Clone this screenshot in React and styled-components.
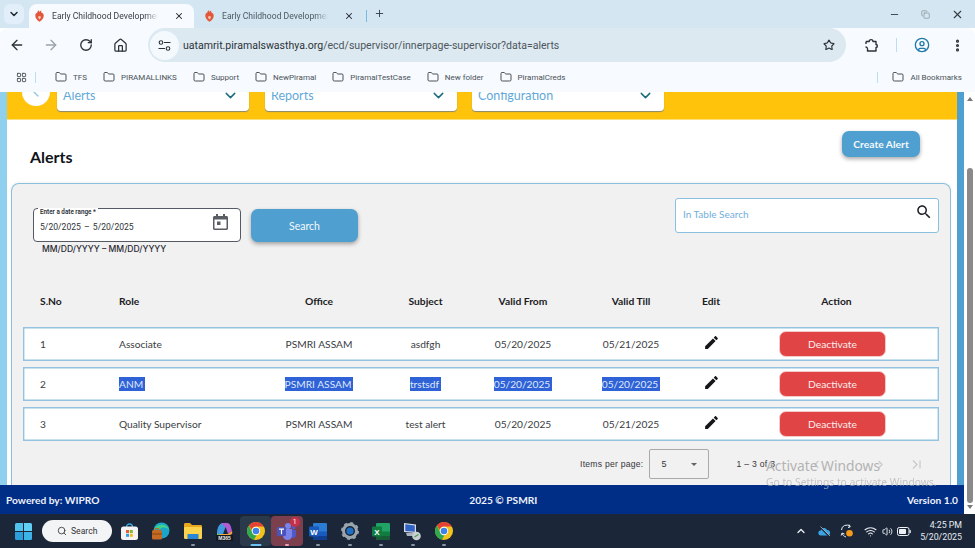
import React from "react";
import styled, { createGlobalStyle } from "styled-components";
import { ArrowLeft, ArrowRight, RotateCw, House, Star, CircleUser, EllipsisVertical, LayoutGrid, Folder, X, Plus, Minus, ChevronDown, ChevronLeft, ChevronRight, Search as SearchGlyph, ChevronUp, Wifi, Volume2, Copy } from "lucide-react";

const Global = createGlobalStyle`
  html, body { margin: 0; padding: 0; background: #fff; }
  * { box-sizing: border-box; }
  #root { width: 975px; height: 548px; overflow: hidden; }
`;
const UI = `Roboto, "Noto Sans", sans-serif`;
const PAGE = `Lato, "Noto Sans", sans-serif`;

const Root = styled.div`position: relative; width: 975px; height: 548px; display: flex; flex-direction: column; overflow: hidden; font-family: ${PAGE};`;

/* Tab strip */
const TabStrip = styled.div`height: 28px; background: #d3e6f2; display: flex; align-items: flex-end; padding-left: 4px; flex: none;`;
const TabMenu = styled.div`width: 20px; height: 20px; margin-bottom: 4px; border-radius: 6px; background: #e2effa; color: #1f2a33; display: flex; align-items: center; justify-content: center; margin-right: 5px;`;
const Tab = styled.div`width: ${p => p.$w}px; height: 24px; margin-left: ${p => p.$l || 0}px; display: flex; align-items: center; padding-left: 5px; border-radius: 8px 8px 0 0; background: ${p => p.$active ? "#f7fafe" : "transparent"}; color: ${p => p.$active ? "#3a4148" : "#4f5860"};`;
const TabText = styled.span`font: 8.6px ${UI}; width: 106px; margin-left: 7px; white-space: nowrap; overflow: hidden; mask-image: linear-gradient(to right, #000 88%, transparent);`;
const TabClose = styled.span`margin-left: 16px; display: flex; color: #20262b;`;
const TabSep = styled.span`width: 1px; height: 12px; background: #79b9e0; margin: 0 0 6px 2px; align-self: flex-end;`;
const NewTab = styled.span`display: flex; margin: 0 0 9px 7px; color: #333d45;`;
const WinControls = styled.div`margin-left: auto; height: 28px; display: flex; align-items: center; gap: 21px; padding-right: 11px; color: #333d45;`;

/* Toolbar */
const Toolbar = styled.div`height: 34px; background: #f7fafe; border-radius: 8px 8px 0 0; display: flex; align-items: center; flex: none; padding-left: 8px;`;
const NavBtn = styled.span`width: ${p => p.$w}px; display: flex; justify-content: center; color: ${p => p.$off ? "#9aa3aa" : "#2a3238"};`;
const Omnibox = styled.div`width: 698px; height: 34px; margin-left: 4px; border-radius: 17px; background: #dce9f1; display: flex; align-items: center; padding-left: 2px;`;
const TuneBadge = styled.span`width: 29px; height: 29px; border-radius: 50%; background: #f4f9fd; display: flex; align-items: center; justify-content: center; color: #2a3238;`;
const Url = styled.span`font: 10.56px ${UI}; color: #2c3339; margin-left: 4px; white-space: nowrap; flex: 1;`;
const UrlDim = styled.span`color: #4d565d;`;
const StarBox = styled.span`display: flex; margin-right: 11px; color: #2a3238;`;
const ToolSep = styled.span`width: 1px; height: 14px; background: #bcdcf0;`;

/* Bookmarks */
const BookmarkBar = styled.div`height: 30px; background: #f7fafe; display: flex; align-items: center; flex: none; padding: 0 13px 0 16px; color: #454d54;`;
const Apps = styled.span`display: flex; color: #4b5359; margin-right: 8px;`;
const BarSep = styled.span`width: 1px; height: 11px; background: #bcdcf0; margin-right: ${p => p.$r}px;`;
const Mark = styled.span`display: flex; align-items: center; gap: 6px; font: 8px ${UI}; color: #4a5259; margin-right: 16px; white-space: nowrap;`;
const AllMarks = styled(Mark)`margin: 0;`;
const Spacer = styled.span`flex: 1;`;

/* Page */
const Body = styled.div`height: 422px; display: flex; flex: none;`;
const Column = styled.div`width: 964px; display: flex; flex-direction: column;`;
const Viewport = styled.div`height: 393px; display: flex; overflow: hidden; background: #fff;`;
const SkyStrip = styled.div`width: 7px; background: #8fd0ee; flex: none;`;
const Content = styled.div`width: 950px; flex: none; display: flex; flex-direction: column;`;
const BlueStrip = styled.div`width: 7px; background: #4f9fd0; flex: none;`;
const Band = styled.div`height: 28px; flex: none; background: #ffc30b; border-bottom: 1px solid #fbe07a; display: flex; align-items: flex-end; padding: 0 0 8px 15px; overflow: hidden;`;
const BackCircle = styled.span`width: 28px; height: 28px; flex: none; border-radius: 50%; background: #fff; margin: 0 7px 5px 0; display: flex; align-items: center; justify-content: center; color: #8fc3e2;`;
const NavSelect = styled.div`width: 192px; height: 32px; flex: none; background: #fff; border-radius: 4px; box-shadow: 0 1px 1px #8a8a70; margin-right: ${p => p.$r}px; padding: 0 10px 0 6px; display: flex; align-items: center; justify-content: space-between; font: 12.5px ${PAGE}; color: #62a9d8;`;
const NavChevron = styled(ChevronDown)`color: #176b7d;`;

const TitleRow = styled.div`height: 63px; flex: none; display: flex; justify-content: space-between; align-items: flex-start; padding: 11px 37px 0 23px;`;
const Title = styled.h1`margin: 15px 0 0; font: 700 16px/22px ${PAGE}; color: #10131a;`;
const PrimaryBtn = styled.button`border: 0; background: #4f9fd0; color: #f4f9fc; border-radius: 7px; font-family: ${PAGE}; box-shadow: 0 2px 4px rgba(0,0,0,.35); padding: 0;`;
const CreateBtn = styled(PrimaryBtn)`width: 78px; height: 26px; font-size: 10.3px; font-weight: 700;`;
const SearchBtn = styled(PrimaryBtn)`width: 107px; height: 33px; font-size: 10.5px; margin: 1px 0 0 10px;`;

const Panel = styled.section`flex: 1; margin: 0 6px 0 4px; background: #f1f1f1; border: 1px solid #8abfde; border-bottom: 0; border-radius: 8px 8px 0 0; padding: 14px 11px 0 11px; box-shadow: 0 -1px 3px rgba(0,0,0,.05);`;
const FilterRow = styled.div`height: 93px; display: flex; justify-content: space-between; align-items: flex-start;`;
const DateGroup = styled.div`display: grid; grid-template-columns: auto auto; margin: 10px 0 0 10px; align-items: start;`;
const DateField = styled.div`position: relative; width: 208px; height: 34px; background: #fff; border: 1px solid #565a66; border-radius: 4px; padding: 11px 0 0 6px; font: 8.6px/14px ${UI}; color: #30343a; word-spacing: 1px;`;
const DateLabel = styled.span`position: absolute; left: 4px; top: -1px; background: #fff; padding: 0 2px; font: 600 6.3px/9px ${UI}; color: #2a2d33; white-space: nowrap; word-spacing: 0;`;
const CalIcon = styled.svg`position: absolute; right: 12px; top: 5px; color: #5a5d63;`;
const DateHint = styled.div`grid-column: 1 / span 2; margin: 1px 0 0 9px; font: 500 8.55px/12px Inter, ${UI}; color: #2b2b33;`;
const SearchBox = styled.div`width: 264px; height: 35px; background: #fff; border: 1px solid #8abfde; border-radius: 3px; padding: 0 5px 0 7px; display: flex; justify-content: space-between; font: 10px/31px ${PAGE}; color: #72aedb;`;
const SearchGlass = styled.svg`margin-top: 4px; color: #1c2026;`;

const Grid = styled.div`display: grid; grid-template-columns: 96px 140px 120px 93px 102px 114px 46px 205px; align-items: center; width: 916px;`;
const HeadRow = styled(Grid)`height: 20px; margin-bottom: 16px; font: 700 10.3px/20px ${PAGE}; color: #1b1c24;`;
const DataRow = styled(Grid)`height: 34px; margin-bottom: 6px; background: #fff; box-shadow: inset 0 0 0 1.4px #93c3e0; font: 10.2px/14px ${PAGE}; color: #3a3d42;`;
const Cell = styled.div`text-align: ${p => p.$left ? "left" : "center"}; padding-left: ${p => p.$pad || 0}px; white-space: nowrap;`;
const Picked = styled.span`background: #2f62d6; color: #dfe8fa; padding: 1px 2px 1px 0;`;
const EditBtn = styled.svg`display: block; margin: -3px auto 0; color: #15171a;`;
const DeactBtn = styled.button`display: block; width: 107px; height: 26px; margin: 0 0 0 45px; border: 1px solid #f3c9c9; border-radius: 7px; background: #e04445; color: #fbeeee; font: 10.3px ${PAGE}; padding: 0;`;

const Pager = styled.div`display: flex; align-items: center; height: 30px; margin-top: 8px; padding-left: 557px; font: 8.6px "Liberation Sans", Arial, sans-serif; color: #34373c;`;
const PerPage = styled.span`letter-spacing: .25px; font-size: 8.6px; white-space: nowrap;`;
const PageSelect = styled.div`position: relative; width: 60px; height: 30px; margin-left: 6px; border: 1px solid #aaa; border-radius: 2px; padding: 0 0 0 11px; line-height: 28px; font-size: 9px;`;
const Caret = styled.span`position: absolute; right: 11px; top: 13px; border-left: 3.5px solid transparent; border-right: 3.5px solid transparent; border-top: 3.5px solid #606368;`;
const Range = styled.span`margin-left: 27px; font-size: 8.6px; letter-spacing: .3px; white-space: nowrap; width: 70px;`;
const PageIcon = styled.span`display: flex; color: #c9c9c9; margin-left: ${p => p.$l}px;`;

const Watermark = styled.div`position: absolute; left: 766px; top: 457px; color: #b3b3b3; font: 13.8px/18px "Noto Sans", sans-serif; white-space: nowrap; pointer-events: none;`;
const WatermarkSub = styled.div`font-size: 10.3px; line-height: 13px; margin-top: 1px; opacity: .72;`;

const Footer = styled.footer`height: 29px; flex: none; background: #002d86; color: #eef2fa; display: flex; justify-content: space-between; align-items: center; padding: 0 6px; font: 700 10.2px ${PAGE};`;

const Scrollbar = styled.div`position: relative; width: 11px; flex: none; background: #fff; display: flex; flex-direction: column; align-items: center; padding-top: 5px;`;
const ScrollUp = styled.span`border-left: 3.5px solid transparent; border-right: 3.5px solid transparent; border-bottom: 4px solid #787878;`;
const ScrollDown = styled.span`border-left: 3.5px solid transparent; border-right: 3.5px solid transparent; border-top: 4px solid #787878;`;
const Thumb = styled.div`width: 6px; height: 335px; margin: 67px 0 2px; background: #8a8a8a; border-radius: 3px;`;

/* Taskbar */
const Taskbar = styled.div`height: 34px; flex: none; background: #1b2739; display: flex; align-items: center; padding: 0 13px 0 15px; color: #e8edf3;`;
const SearchPill = styled.div`width: 70px; height: 22px; margin: 0 2.3px 0 10px; background: #f3f4f6; border-radius: 11px; display: flex; align-items: center; gap: 4px; padding-left: 15px; color: #333; font: 8.6px ${UI};`;
const Slot = styled.div`position: relative; width: 31.4px; height: 30px; display: flex; align-items: center; justify-content: center; border-radius: 4px; background: ${p => p.$bg || "transparent"};`;
const Dot = styled.span`position: absolute; bottom: 0; left: 50%; transform: translateX(-50%); width: ${p => p.$w || 4}px; height: 2px; border-radius: 1px; background: ${p => p.$c || "#8d95a0"};`;
const TraySlot = styled.span`width: ${p => p.$w}px; display: flex; justify-content: center; color: #eef2f6;`;
const Clock = styled.div`width: 46.5px; text-align: right; font: 8.8px/12px ${UI}; color: #e6ebf1;`;
const TrayStart = styled.div`margin-left: auto; display: flex; align-items: center;`;

const Favicon = () => (
  <svg width="9" height="12" viewBox="0 0 9 12" style={{ margin: "0 1px" }}><path d="M4.500 11.800C1.800 10 .2 7.800.3 5.500.4 3.800 1.300 2.800 2.300 2.800 2.300 1.800 3 .6 4 .2 3.900 1 4.200 1.600 4.600 2 4.900 1.300 5.500.8 6.200.6 6 1.400 6.200 2.200 6.600 2.800c1.200.2 2.100 1.300 2.100 2.900 0 2.300-1.500 4.400-4.200 6.100z" fill="#e2563a"/><path d="M4.500 9.500C3.400 8.500 2.900 7.400 3.100 6.300c.6.200 1 .1 1.400-.6.400.7.800.9 1.400.6.200 1.100-.3 2.200-1.400 3.200z" fill="#f9c4b2"/></svg>
);
const Tune = () => (
  <svg width="13" height="11" viewBox="0 0 13 11" fill="none" stroke="currentColor" strokeWidth="1.100"><circle cx="3" cy="2.500" r="1.800"/><path d="M6 2.500h6.500M.5 8.500H7"/><circle cx="10" cy="8.500" r="1.800"/></svg>
);
const Puzzle = () => (
  <svg width="15" height="15" viewBox="0 0 15 15" fill="none" stroke="#2a3238" strokeWidth="1.400" strokeLinejoin="round"><path d="M2 3.500h3.200C5.200 1 9 1 9 3.500h3v3c1.800 0 1.800 3 0 3v3.500H3.500C3.500 11 3.800 10 3 9.500 2.500 9 2 9 1.500 9"/><path d="M2 3.500v2.500"/></svg>
);
const EditIcon = () => (
  <EditBtn width="17" height="17" viewBox="0 0 24 24" fill="currentColor"><path d="M3 17.250V21h3.750L17.810 9.940l-3.750-3.750L3 17.250zM20.710 7.040c.39-.39.39-1.020 0-1.410l-2.340-2.340c-.39-.39-1.020-.39-1.410 0l-1.830 1.830 3.750 3.750 1.830-1.830z"/></EditBtn>
);
const LastPage = () => (
  <svg width="13" height="13" viewBox="0 0 13 13" fill="none" stroke="currentColor" strokeWidth="1.200"><path d="M3 2.500l4 4-4 4M10 2.500v8"/></svg>
);
const WinLogo = () => (
  <svg width="17" height="17" viewBox="0 0 17 17"><path d="M0 1.500A1.500 1.500 0 0 1 1.500 0H8v8H0z" fill="#4fc3ec"/><path d="M9 0h6.500A1.500 1.500 0 0 1 17 1.500V8H9z" fill="#5fd0f3"/><path d="M0 9h8v8H1.500A1.500 1.500 0 0 1 0 15.500z" fill="#2a9fdc"/><path d="M9 9h8v6.500a1.500 1.500 0 0 1-1.500 1.500H9z" fill="#3db4e8"/></svg>
);
const StoreIcon = () => (
  <svg width="17" height="17" viewBox="0 0 17 17"><path d="M5.500 4c0-4 6-4 6 0" fill="none" stroke="#38a6e0" strokeWidth="1.300"/><rect y="3.500" width="17" height="13.500" rx="2.500" fill="#f2f3f2"/><rect x="5" y="7" width="3" height="3" fill="#ef5b30"/><rect x="8.800" y="7" width="3" height="3" fill="#7fba2c"/><rect x="5" y="10.800" width="3" height="3" fill="#2ca1e6"/><rect x="8.800" y="10.800" width="3" height="3" fill="#f9b81c"/></svg>
);
const EdgeIcon = () => (
  <svg width="18" height="18" viewBox="0 0 18 18"><circle cx="9.500" cy="8.500" r="8" fill="#1aa6c8"/><path d="M2 8C3 2 15 0 17.300 8c-2-3-8-3.500-9.500-.5C6 6.500 4 7 2 8z" fill="#3fd08a"/><rect x="0" y="8" width="10" height="9.500" rx="1.500" fill="#c46a24"/><rect x="3.300" y="6.500" width="3.400" height="2.500" fill="none" stroke="#c46a24"/><path d="M0 12h10" stroke="#8a4415"/></svg>
);
const FolderApp = () => (
  <svg width="18" height="16" viewBox="0 0 18 16"><path d="M0 1.500C0 .7.600 0 1.300 0H6l2 2h8.700c.7 0 1.300.6 1.300 1.300V6H0z" fill="#e8a91f"/><rect y="4" width="18" height="12" rx="1.300" fill="#fcd34d"/><rect x="3.500" y="11" width="11" height="5" fill="#2a86d6"/></svg>
);
const M365 = () => (
  <svg width="19" height="19" viewBox="0 0 19 19"><path d="M2 11C2 5 5 1 8 1h4L8 12H2z" fill="#3f9ae0"/><path d="M6 1h6c3 0 4 3 5 8l-4 3-2-6z" fill="#b35bd0"/><path d="M4 12h9l4-3c1 3-1 4-3 4H4z" fill="#f4a53d"/><path d="M2 11l3 2H2z" fill="#4fce7a"/><rect x="1" y="13" width="17" height="6" fill="#15181c"/><text x="9.500" y="18" textAnchor="middle" fontSize="5" fontWeight="700" fontFamily="Liberation Sans" fill="#eee">M365</text></svg>
);
const ChromeIcon = () => (
  <svg width="18" height="18" viewBox="0 0 18 18"><circle cx="9" cy="9" r="9" fill="#f3c21c"/><path d="M9 0a9 9 0 0 1 7.800 4.500H9a4.500 4.500 0 0 0-4.300 3.200L1.900 3.500A9 9 0 0 1 9 0z" fill="#e34234"/><path d="M1.900 3.500l3.900 8.200A4.500 4.500 0 0 0 9.500 13.500L6.800 17.700A9 9 0 0 1 1.900 3.500z" fill="#2fa84f"/><circle cx="9" cy="9" r="4.200" fill="#fff"/><circle cx="9" cy="9" r="3.300" fill="#3c82e8"/></svg>
);
const TeamsIcon = () => (
  <svg width="20" height="18" viewBox="0 0 20 18"><circle cx="11" cy="4" r="3" fill="#7b83eb"/><circle cx="16.500" cy="5.500" r="2" fill="#5059c9"/><path d="M13 8h6v5a3 3 0 0 1-6 0z" fill="#5059c9"/><path d="M6 7h9v6.500a4.500 4.500 0 0 1-9 0z" fill="#7b83eb"/><rect y="5" width="9" height="9" rx="1" fill="#4b53bc"/><path d="M2 7.200h5M4.500 7.200v5" stroke="#fff" strokeWidth="1.200"/></svg>
);
const Badge = styled.span`position: absolute; top: 1px; right: 3px; width: 10px; height: 10px; border-radius: 50%; background: #c4314b; color: #fff; font: 7px/10px ${UI}; text-align: center;`;
const WordIcon = () => (
  <svg width="18" height="17" viewBox="0 0 18 17"><rect x="4" width="14" height="17" rx="1.200" fill="#2b7cd3"/><rect x="4" y="8.500" width="14" height="4.500" fill="#185abd"/><rect x="4" y="13" width="14" height="4" fill="#103f91"/><rect y="3.500" width="10" height="10" rx="1" fill="#185abd"/><text x="5" y="11.500" textAnchor="middle" fontSize="8" fontWeight="700" fontFamily="Liberation Sans" fill="#fff">W</text></svg>
);
const GearIcon = () => (
  <svg width="18" height="18" viewBox="0 0 18 18"><circle cx="9" cy="9" r="6.500" fill="none" stroke="#9aa4ad" strokeWidth="3"/><circle cx="9" cy="9" r="8" fill="none" stroke="#9aa4ad" strokeWidth="2" strokeDasharray="3 3.280"/><circle cx="9" cy="9" r="3.600" fill="#1f6fc4"/></svg>
);
const ExcelIcon = () => (
  <svg width="18" height="17" viewBox="0 0 18 17"><rect x="4" width="14" height="17" rx="1.200" fill="#21a366"/><rect x="4" y="8.500" width="14" height="4.500" fill="#107c41"/><rect x="4" y="13" width="14" height="4" fill="#185c37"/><rect y="3.500" width="10" height="10" rx="1" fill="#107c41"/><text x="5" y="11.500" textAnchor="middle" fontSize="8" fontWeight="700" fontFamily="Liberation Sans" fill="#fff">X</text></svg>
);
const RemoteIcon = () => (
  <svg width="19" height="19" viewBox="0 0 19 19"><path d="M1 1l12 1.500V11L1 10z" fill="#d8dde4"/><path d="M2.300 2.300l9.500 1.200v6.300l-9.500-.9z" fill="#2f63c6"/><path d="M3 11h8l2 3H4z" fill="#aab2bc"/><circle cx="13.500" cy="14" r="4.300" fill="#c9ced4"/><path d="M11.500 15l4-2.500" stroke="#4da34a" strokeWidth="1.400"/></svg>
);
const Cloud = () => (
  <svg width="13" height="11" viewBox="0 0 13 11"><path d="M3 9.500a2.500 2.500 0 0 1-.300-5C3.400 1.500 7.500 1 9 4a2.800 2.800 0 0 1 1 5.500z" fill="#3aa4e4"/><path d="M1.500.5l10 10" stroke="#1b2739" strokeWidth="1.600"/><path d="M2.500.5l9.500 9.500" stroke="#c8d2dc" strokeWidth=".7"/></svg>
);
const SyncDot = () => (
  <svg width="14" height="14" viewBox="0 0 14 14" fill="none"><path d="M1.500 6A5 5 0 0 1 10 2.500M9 .5l1.300 2.300L8 3.600M2 9c.5 2 2 3.500 4 4M1.200 11.500l1-2.500 2.300 1.100" stroke="#e8edf3" strokeWidth="1"/><circle cx="9.500" cy="9.300" r="3.300" fill="#f59a1b"/></svg>
);
const Battery = () => (
  <svg width="14" height="9" viewBox="0 0 14 9"><rect x=".5" y=".5" width="11.500" height="8" rx="1.800" fill="none" stroke="#eef2f6"/><rect x="2" y="2" width="7" height="5" rx=".8" fill="#eef2f6"/><rect x="12.500" y="3" width="1.300" height="3" rx=".5" fill="#eef2f6"/></svg>
);

const bookmarks = ["TFS", "PIRAMALLINKS", "Support", "NewPiramal", "PiramalTestCase", "New folder", "PiramalCreds"];
const rows = [
  { n: 1, role: "Associate", subject: "asdfgh", from: "05/20/2025", till: "05/21/2025" },
  { n: 2, role: "ANM", subject: "trstsdf", from: "05/20/2025", till: "05/20/2025", picked: true },
  { n: 3, role: "Quality Supervisor", subject: "test alert", from: "05/20/2025", till: "05/21/2025" },
];
const apps = [
  { key: "store", icon: <StoreIcon /> , dot: false },
  { key: "edge", icon: <EdgeIcon /> , dot: false },
  { key: "files", icon: <FolderApp />, dot: true },
  { key: "m365", icon: <M365 />, dot: false },
  { key: "chrome", icon: <ChromeIcon />, bg: "#2b3a4b", dot: true, dotW: 11, dotC: "#6cc4f0" },
  { key: "teams", icon: <TeamsIcon />, bg: "#7c3f4d", dot: true, dotC: "#f0a3ae", badge: true },
  { key: "word", icon: <WordIcon />, dot: true },
  { key: "gear", icon: <GearIcon />, dot: true },
  { key: "excel", icon: <ExcelIcon />, dot: true },
  { key: "remote", icon: <RemoteIcon />, dot: true },
  { key: "chrome2", icon: <ChromeIcon />, dot: true },
];
const Text = ({ picked, children }) => picked ? <Picked>{children}</Picked> : children;

export default function App() {
  return (
    <Root>
      <Global />
      <TabStrip>
        <TabMenu><ChevronDown size={12} strokeWidth={3} /></TabMenu>
        <Tab $w={165} $active>
          <Favicon /><TabText>Early Childhood Development</TabText><TabClose><X size={10} strokeWidth={2.5} /></TabClose>
        </Tab>
        <Tab $w={165} $l={5}>
          <Favicon /><TabText>Early Childhood Development</TabText><TabClose><X size={10} strokeWidth={2.5} /></TabClose>
        </Tab>
        <TabSep />
        <NewTab><Plus size={11} strokeWidth={2} /></NewTab>
        <WinControls>
          <Minus size={11} />
          <Copy size={9} color="#8b949b" />
          <X size={13} />
        </WinControls>
      </TabStrip>
      <Toolbar>
        <NavBtn $w={18}><ArrowLeft size={16} /></NavBtn>
        <NavBtn $w={50} $off><ArrowRight size={16} /></NavBtn>
        <NavBtn $w={20}><RotateCw size={14} strokeWidth={2.3} /></NavBtn>
        <NavBtn $w={48}><House size={15} /></NavBtn>
        <Omnibox>
          <TuneBadge><Tune /></TuneBadge>
          <Url>uatamrit.piramalswasthya.org<UrlDim>/ecd/supervisor/innerpage-supervisor?data=alerts</UrlDim></Url>
          <StarBox><Star size={12} strokeWidth={2.3} /></StarBox>
        </Omnibox>
        <NavBtn $w={50}><Puzzle /></NavBtn>
        <ToolSep />
        <NavBtn $w={50}><CircleUser size={16} color="#1f7aaa" /></NavBtn>
        <NavBtn $w={20}><EllipsisVertical size={15} strokeWidth={3} /></NavBtn>
      </Toolbar>
      <BookmarkBar>
        <Apps><LayoutGrid size={11} strokeWidth={2} /></Apps>
        <BarSep $r={19} />
        {bookmarks.map(b => (
          <Mark key={b}><Folder size={12} />{b}</Mark>
        ))}
        <Spacer />
        <BarSep $r={14} />
        <AllMarks><Folder size={12} />All Bookmarks</AllMarks>
      </BookmarkBar>
      <Body>
        <Column>
          <Viewport>
            <SkyStrip />
            <Content>
              <Band>
                <BackCircle><ChevronLeft size={16} /></BackCircle>
                <NavSelect $r={16}>Alerts<NavChevron size={17} /></NavSelect>
                <NavSelect $r={15}>Reports<NavChevron size={17} /></NavSelect>
                <NavSelect>Configuration<NavChevron size={17} /></NavSelect>
              </Band>
              <TitleRow>
                <Title>Alerts</Title>
                <CreateBtn>Create Alert</CreateBtn>
              </TitleRow>
              <Panel>
                <FilterRow>
                  <DateGroup>
                    <DateField>
                      <DateLabel>Enter a date range *</DateLabel>
                      5/20/2025 – 5/20/2025
                      <CalIcon width="15" height="16" viewBox="0 0 15 16" fill="currentColor"><path d="M3 0h2v2h5V0h2v2h1.500c.8 0 1.500.7 1.500 1.500v11c0 .8-.7 1.500-1.500 1.500h-12C.7 16 0 15.300 0 14.500v-11C0 2.700.7 2 1.500 2H3zM1.500 5.500v9h12v-9z"/><rect x="4" y="7.500" width="3.500" height="3.500"/></CalIcon>
                    </DateField>
                    <SearchBtn>Search</SearchBtn>
                    <DateHint>MM/DD/YYYY – MM/DD/YYYY</DateHint>
                  </DateGroup>
                  <SearchBox>
                    In Table Search
                    <SearchGlass width="18" height="18" viewBox="0 0 24 24" fill="currentColor"><path d="M15.500 14h-.79l-.28-.27C15.410 12.590 16 11.110 16 9.500 16 5.910 13.090 3 9.500 3S3 5.910 3 9.500 5.910 16 9.500 16c1.610 0 3.090-.59 4.230-1.570l.27.28v.79l5 4.990L20.490 19l-4.990-5zm-6 0C7.010 14 5 11.990 5 9.500S7.010 5 9.500 5 14 7.010 14 9.500 11.990 14 9.500 14z"/></SearchGlass>
                  </SearchBox>
                </FilterRow>
                <HeadRow>
                  <Cell $left $pad={17}>S.No</Cell>
                  <Cell $left>Role</Cell>
                  <Cell>Office</Cell>
                  <Cell>Subject</Cell>
                  <Cell>Valid From</Cell>
                  <Cell>Valid Till</Cell>
                  <Cell>Edit</Cell>
                  <Cell>Action</Cell>
                </HeadRow>
                {rows.map(r => (
                  <DataRow key={r.n}>
                    <Cell $left $pad={17}>{r.n}</Cell>
                    <Cell $left><Text picked={r.picked}>{r.role}</Text></Cell>
                    <Cell><Text picked={r.picked}>PSMRI ASSAM</Text></Cell>
                    <Cell><Text picked={r.picked}>{r.subject}</Text></Cell>
                    <Cell><Text picked={r.picked}>{r.from}</Text></Cell>
                    <Cell><Text picked={r.picked}>{r.till}</Text></Cell>
                    <Cell><EditIcon /></Cell>
                    <Cell><DeactBtn>Deactivate</DeactBtn></Cell>
                  </DataRow>
                ))}
                <Pager>
                  <PerPage>Items per page:</PerPage>
                  <PageSelect>5<Caret /></PageSelect>
                  <Range>1 – 3 of 3</Range>
                  <PageIcon $l={4}><ChevronLeft size={13} /></PageIcon>
                  <PageIcon $l={51}><ChevronRight size={13} /></PageIcon>
                  <PageIcon $l={23}><LastPage /></PageIcon>
                </Pager>
              </Panel>
            </Content>
            <BlueStrip />
          </Viewport>
          <Footer>
            <span>Powered by: WIPRO</span>
            <span>2025 © PSMRI</span>
            <span>Version 1.0</span>
          </Footer>
        </Column>
        <Scrollbar>
          <ScrollUp />
          <Thumb />
          <ScrollDown />
        </Scrollbar>
      </Body>
      <Taskbar>
        <WinLogo />
        <SearchPill><SearchGlyph size={10} strokeWidth={2} />Search</SearchPill>
        {apps.map(a => (
          <Slot key={a.key} $bg={a.bg}>
            {a.icon}
            {a.badge && <Badge>1</Badge>}
            {a.dot && <Dot $w={a.dotW} $c={a.dotC} />}
          </Slot>
        ))}
        <TrayStart>
          <TraySlot $w={23}><ChevronUp size={12} strokeWidth={2.5} /></TraySlot>
          <TraySlot $w={23}><Cloud /></TraySlot>
          <TraySlot $w={23}><SyncDot /></TraySlot>
          <TraySlot $w={23}><Wifi size={13} /></TraySlot>
          <TraySlot $w={11}><Volume2 size={13} /></TraySlot>
          <TraySlot $w={23}><Battery /></TraySlot>
          <Clock>4:25 PM<br />5/20/2025</Clock>
        </TrayStart>
      </Taskbar>
      <Watermark>
        Activate Windows
        <WatermarkSub>Go to Settings to activate Windows.</WatermarkSub>
      </Watermark>
    </Root>
  );
}
